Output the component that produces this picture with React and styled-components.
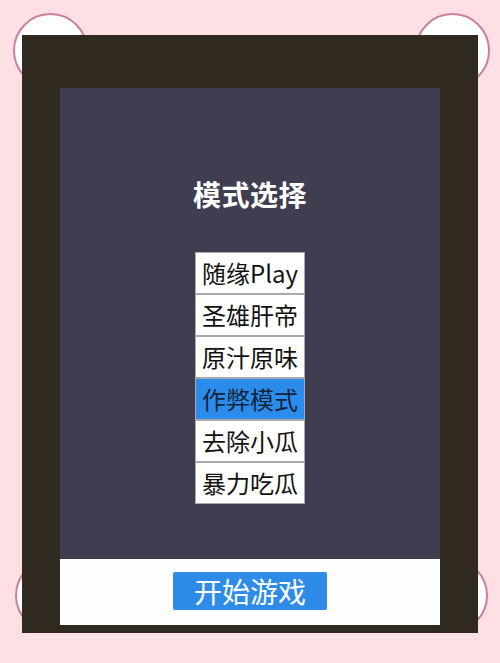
import React, { useState } from "react";
import styled, { createGlobalStyle } from "styled-components";

const GlobalStyle = createGlobalStyle`
  html, body {
    margin: 0;
    padding: 0;
    background: #fddfe4;
  }
  body {
    font-family: "Noto Sans CJK SC", "Noto Sans", sans-serif;
  }
`;

const Page = styled.div`
  position: relative;
  width: 500px;
  height: 663px;
  overflow: hidden;
  background: #fddfe4;
  padding: 35px 22px 0 22px;
  box-sizing: border-box;
`;

const Bubble = styled.div`
  position: absolute;
  width: 75px;
  height: 75px;
  border-radius: 50%;
  background: #ffffff;
  border: 2px solid #cc7f98;
  box-sizing: border-box;
  left: ${(p) => p.$x - 37}px;
  top: ${(p) => p.$y - 37}px;
`;

const Frame = styled.div`
  position: relative;
  width: 456px;
  height: 598px;
  box-sizing: border-box;
  background: #30291f;
  padding: 53px 38px 8px 38px;
  display: flex;
  flex-direction: column;
`;

const Stage = styled.div`
  flex: 1;
  background: #3e3e50;
  display: flex;
  flex-direction: column;
  align-items: center;
  padding-top: 92px;
`;

const Title = styled.h1`
  margin: 0;
  font-size: 28px;
  line-height: 28px;
  font-weight: 700;
  color: #ffffff;
  letter-spacing: 0.5px;
`;

const ModeList = styled.div`
  margin-top: 44px;
  display: flex;
  flex-direction: column;
  width: 110px;
`;

const ModeItem = styled.div`
  height: 40px;
  border: 1px solid #a9a9ae;
  background: ${(p) => (p.$active ? "#2b8cec" : "#ffffff")};
  color: ${(p) => (p.$active ? "#14243a" : "#111111")};
  font-size: 24px;
  line-height: 40px;
  text-align: center;
  white-space: nowrap;
  cursor: pointer;
`;

const Footer = styled.div`
  height: 66px;
  background: #fefefe;
  display: flex;
  align-items: center;
  justify-content: center;
  padding-bottom: 2px;
  box-sizing: border-box;
`;

const StartButton = styled.button`
  width: 154px;
  height: 38px;
  border: none;
  border-radius: 2px;
  background: #2e8be8;
  color: #ffffff;
  font-family: "Noto Sans CJK SC", "Noto Sans", sans-serif;
  font-size: 28px;
  line-height: 38px;
  padding: 0;
  cursor: pointer;
`;

const modes = ["随缘Play", "圣雄肝帝", "原汁原味", "作弊模式", "去除小瓜", "暴力吃瓜"];

export default function App() {
  const [current, setCurrent] = useState(3);
  return (
    <>
      <GlobalStyle />
      <Page>
        <Bubble $x={50} $y={50} />
        <Bubble $x={452} $y={50} />
        <Bubble $x={52} $y={595} />
        <Bubble $x={450} $y={595} />
        <Frame>
          <Stage>
            <Title>模式选择</Title>
            <ModeList>
              {modes.map((m, i) => (
                <ModeItem key={m} $active={i === current} onClick={() => setCurrent(i)}>
                  {m}
                </ModeItem>
              ))}
            </ModeList>
          </Stage>
          <Footer>
            <StartButton>开始游戏</StartButton>
          </Footer>
        </Frame>
      </Page>
    </>
  );
}
